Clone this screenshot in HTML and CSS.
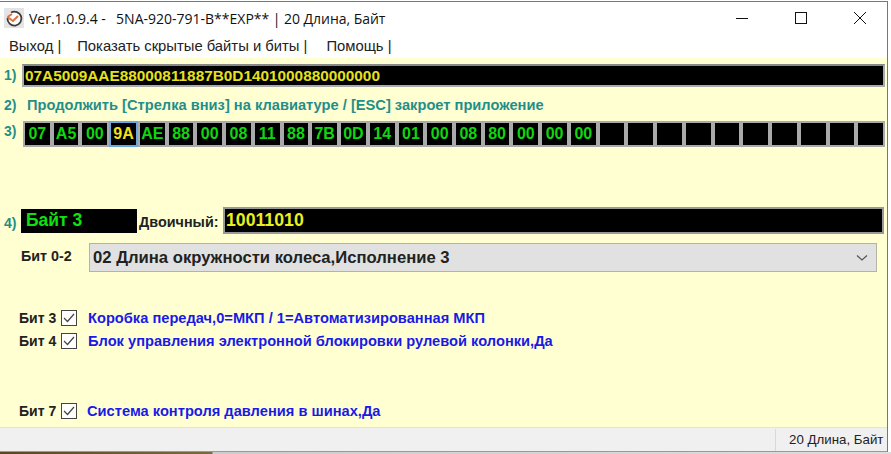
FILE: index.html
```html
<!DOCTYPE html>
<html lang="en">
<head>
  <meta charset="UTF-8" />
  <title>Ver.1.0.9.4</title>
  <link rel="stylesheet" href="styles.css">
</head>
<body>
  <div class="window">
    <!-- Title bar -->
    <div class="titlebar">
      <svg class="app-icon" width="20" height="20" viewBox="0 0 20 20">
        <rect width="20" height="20" fill="#e4e4e4"/>
        <path d="M7 4.500A7 7 0 1 1 3.500 10" fill="#fff" stroke="#3c3c3c" stroke-width="1.800"/>
        <path d="M3.500 9L8 6M3.500 9L9 13L14 8" fill="none" stroke="#e0703c" stroke-width="2"/>
      </svg>
      <span class="title">Ver.1.0.9.4 -&nbsp;&nbsp; 5NA-920-791-B**EXP** | 20 Длина, Байт</span>
      <div class="controls">
        <svg width="14" height="14" viewBox="0 0 14 14"><path d="M1 7.500H13" stroke="#111" fill="none"/></svg>
        <svg width="14" height="14" viewBox="0 0 14 14"><rect x="1.500" y="1.500" width="11" height="11" stroke="#111" fill="none"/></svg>
        <svg width="14" height="14" viewBox="0 0 14 14"><path d="M1 1L13 13M13 1L1 13" stroke="#111" fill="none"/></svg>
      </div>
    </div>

    <!-- Menu -->
    <div class="menu">
      <span>Выход |</span>
      <span>Показать скрытые байты и биты |</span>
      <span class="menu-help">Помощь |</span>
    </div>

    <div class="client">
      <div class="row row-hex">
        <span class="num">1)</span>
        <div class="hexbox">07A5009AAE88000811887B0D1401000880000000</div>
      </div>

      <div class="row row-hint">
        <span class="num">2)</span>
        <span class="hint">Продолжить [Стрелка вниз] на клавиатуре / [ESC] закроет приложение</span>
      </div>

      <div class="row row-bytes">
        <span class="num">3)</span>
        <div class="bytes">
          <div class="cell">07</div>
          <div class="cell">A5</div>
          <div class="cell">00</div>
          <div class="cell selected">9A</div>
          <div class="cell">AE</div>
          <div class="cell">88</div>
          <div class="cell">00</div>
          <div class="cell">08</div>
          <div class="cell">11</div>
          <div class="cell">88</div>
          <div class="cell">7B</div>
          <div class="cell">0D</div>
          <div class="cell">14</div>
          <div class="cell">01</div>
          <div class="cell">00</div>
          <div class="cell">08</div>
          <div class="cell">80</div>
          <div class="cell">00</div>
          <div class="cell">00</div>
          <div class="cell">00</div>
          <div class="cell"></div>
          <div class="cell"></div>
          <div class="cell"></div>
          <div class="cell"></div>
          <div class="cell"></div>
          <div class="cell"></div>
          <div class="cell"></div>
          <div class="cell"></div>
          <div class="cell"></div>
          <div class="cell"></div>
        </div>
      </div>

      <div class="row row-byte">
        <span class="num num-4">4)</span>
        <div class="byte-name">Байт 3</div>
        <span class="binary-label">Двоичный:</span>
        <div class="binary">10011010</div>
      </div>

      <div class="row row-select">
        <span class="bit-range">Бит 0-2</span>
        <div class="select">
          <span>02 Длина окружности колеса,Исполнение 3</span>
          <svg width="12" height="8" viewBox="0 0 12 8"><path d="M1 1.500L6 6L11 1.500" stroke="#555" stroke-width="1.200" fill="none"/></svg>
        </div>
      </div>

      <div class="bit bit-3">
        <span class="bit-name">Бит 3</span>
        <svg class="check" width="16" height="16" viewBox="0 0 16 16"><rect x="0.500" y="0.500" width="15" height="15" fill="#fff" stroke="#444"/><path d="M3 8L6.500 11.500L13 4" stroke="#444" stroke-width="1.200" fill="none"/></svg>
        <span class="bit-text">Коробка передач,0=МКП / 1=Автоматизированная МКП</span>
      </div>
      <div class="bit bit-4">
        <span class="bit-name">Бит 4</span>
        <svg class="check" width="16" height="16" viewBox="0 0 16 16"><rect x="0.500" y="0.500" width="15" height="15" fill="#fff" stroke="#444"/><path d="M3 8L6.500 11.500L13 4" stroke="#444" stroke-width="1.200" fill="none"/></svg>
        <span class="bit-text">Блок управления электронной блокировки рулевой колонки,Да</span>
      </div>
      <div class="bit bit-7">
        <span class="bit-name">Бит 7</span>
        <svg class="check" width="16" height="16" viewBox="0 0 16 16"><rect x="0.500" y="0.500" width="15" height="15" fill="#fff" stroke="#444"/><path d="M3 8L6.500 11.500L13 4" stroke="#444" stroke-width="1.200" fill="none"/></svg>
        <span class="bit-text bit-text-7">Система контроля давления в шинах,Да</span>
      </div>
    </div>

    <!-- Status bar -->
    <div class="status">
      <span class="status-cell">20 Длина, Байт</span>
    </div>
  </div>
  <div class="desktop-edge"></div>
</body>
</html>
```

FILE: styles.css
```css
html, body {
  margin: 0;
  padding: 0;
}
body {
  width: 891px;
  height: 454px;
  box-sizing: border-box;
  padding-top: 1px;
  background: #fff;
  overflow: hidden;
  font-family: "Liberation Sans", Arial, sans-serif;
}
.window {
  width: 888px;
  height: 451px;
  box-sizing: border-box;
  border-top: 1px solid #777;
  border-right: 1px solid #777;
  border-bottom: 1px solid #999;
  display: flex;
  flex-direction: column;
  background: #fff;
}
.desktop-edge {
  height: 2px;
  background: linear-gradient(to right, #5a4620 0, #7a6a40 212px, #ccc 213px, #ddd 100%);
}

/* title bar */
.titlebar {
  height: 32px;
  display: flex;
  align-items: center;
  padding-left: 4px;
  flex-shrink: 0;
}
.app-icon {
  margin-right: 5px;
}
.title {
  font-family: "Open Sans", sans-serif;
  font-size: 14px;
  word-spacing: -0.15px;
  color: #111;
}
.controls {
  margin-left: auto;
  display: flex;
  gap: 45px;
  padding-right: 20px;
}

/* menu */
.menu {
  height: 24px;
  display: flex;
  align-items: center;
  padding-left: 9px;
  gap: 16px;
  font-size: 14.8px;
  color: #222;
  flex-shrink: 0;
}
.menu-help {
  margin-left: 3px;
}

/* main area */
.client {
  flex: 1;
  background: #ffffd2;
  padding: 6px 2px 0 4px;
}
.row {
  display: flex;
}
.num {
  font-size: 14px;
  font-weight: bold;
  color: #1f8f8a;
  width: 18px;
  flex-shrink: 0;
}
.row-hex .num {
  margin-top: 3px;
}
.hexbox {
  flex: 1;
  height: 23px;
  box-sizing: border-box;
  background: #000;
  border: 2px solid #aaa;
  border-top-color: #888;
  color: #e6e01e;
  font-size: 15.35px;
  font-weight: bold;
  line-height: 19px;
  padding-left: 1px;
}
.row-hint {
  margin-top: 10px;
}
.hint {
  font-size: 14.67px;
  font-weight: bold;
  color: #1f8f8a;
  margin-left: 5px;
}
.row-bytes {
  margin-top: 8px;
}
.row-bytes .num {
  margin-top: 2px;
}
.bytes {
  flex: 1;
  margin-left: 1px;
  display: grid;
  grid-template-columns: repeat(30, 1fr);
}
.cell {
  height: 26px;
  box-sizing: border-box;
  background: #000;
  border: 2px solid #aaa;
  color: #0fd60f;
  font-size: 16px;
  font-weight: bold;
  line-height: 22px;
  text-align: center;
}
.cell.selected {
  color: #f2e21a;
  border-color: #6aa8e0;
}

.row-byte {
  margin-top: 60px;
  align-items: center;
}
.num-4 {
  width: 17px;
  margin-top: 4px;
}
.byte-name {
  width: 116px;
  height: 24px;
  background: #000;
  color: #0fe00f;
  font-size: 17.5px;
  font-weight: bold;
  line-height: 22px;
  padding-left: 5px;
  box-sizing: border-box;
}
.binary-label {
  font-size: 14.4px;
  font-weight: bold;
  color: #222;
  margin-left: 2px;
  margin-top: 3px;
  width: 84px;
}
.binary {
  flex: 1;
  height: 27px;
  margin-right: 1px;
  box-sizing: border-box;
  background: #000;
  border: 2px solid #999;
  color: #eded20;
  font-size: 17.7px;
  font-weight: bold;
  line-height: 22px;
  padding-left: 1px;
}

.row-select {
  margin-top: 9px;
  align-items: center;
}
.bit-range {
  font-size: 14.3px;
  font-weight: bold;
  color: #222;
  width: 68px;
  margin-left: 17px;
  margin-top: -3px;
}
.select {
  width: 788px;
  height: 29px;
  box-sizing: border-box;
  background: #e1e1e1;
  border: 1px solid #b4b4a4;
  display: flex;
  align-items: center;
  justify-content: space-between;
  padding: 1px 8px 0 3px;
  font-size: 16.65px;
  font-weight: bold;
  color: #222;
}

.bit {
  display: flex;
  align-items: center;
  height: 20px;
  margin-left: 15px;
}
.bit-3 {
  margin-top: 36px;
}
.bit-4 {
  margin-top: 3px;
}
.bit-7 {
  margin-top: 50px;
}
.bit-name {
  font-size: 14px;
  font-weight: bold;
  color: #222;
  width: 42px;
}
.check {
  flex-shrink: 0;
}
.bit-text {
  font-size: 14.67px;
  font-weight: bold;
  color: #1a1ae6;
  margin-left: 11px;
}
.bit-text-7 {
  margin-left: 10px;
}

/* status bar */
.status {
  height: 24px;
  flex-shrink: 0;
  background: #f0f0f0;
  border-top: 1px solid #e2e2e2;
  box-sizing: border-box;
  display: flex;
  justify-content: flex-end;
  align-items: center;
}
.status-cell {
  width: 112px;
  box-sizing: border-box;
  border-left: 1px solid #d8d8d8;
  height: 22px;
  line-height: 22px;
  font-size: 13.3px;
  color: #222;
  padding-left: 13px;
}
```
